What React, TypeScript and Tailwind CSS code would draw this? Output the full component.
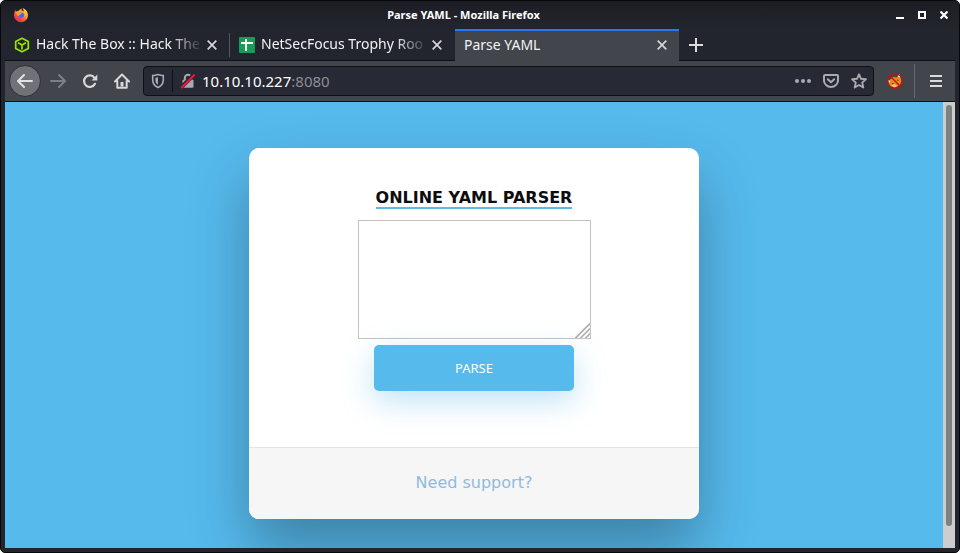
import React from "react";

type IconProps = { className?: string };

function FirefoxIcon() {
  return (
    <svg width="16" height="16" viewBox="0 0 16 16" aria-hidden="true">
      <defs>
        <linearGradient id="fx-body" x1="0.85" y1="0.05" x2="0.2" y2="0.95">
          <stop offset="0" stopColor="#ffe14a" />
          <stop offset="0.4" stopColor="#ff9a36" />
          <stop offset="0.7" stopColor="#f4503f" />
          <stop offset="1" stopColor="#e0245e" />
        </linearGradient>
      </defs>
      <path
        d="M2.6 2.8c-.1 1 .1 1.600.3 2 .9-.9 2-1.200 3-1.100C6.800 2.200 8 1.800 8.800 1.800c-.4.6-.4 1.300 0 1.900 1 .2 1.600.5 2 .9C10.700 3 10 2 9.600 1c2.600.9 5.400 3.500 5.400 7.300A7 7 0 0 1 8 15.300 7 7 0 0 1 1 8.400C1 6 1.700 4.200 2.600 2.800z"
        fill="url(#fx-body)"
      />
      <path d="M5.300 6.300c1-.9 2-.2 3.100-.6 1.400-.4 2.700.7 2.700 2.300a3 3 0 0 1-3.100 3c-1.700 0-3-1.200-3-2.800 0-.7.100-1.300.3-1.900z" fill="#3b6fe0" />
      <path d="M3 5.100c1.200-.6 2.700-.5 3.600.4.7.6 1.400.8 2.300.8-.4.900-1.200 1.200-2.200 1.400-.7.200-.8.800-.5 1.500C4.400 8.900 3.200 7.300 3 5.100z" fill="#ff9a36" />
    </svg>
  );
}

function CubeIcon() {
  return (
    <svg width="16" height="16" viewBox="0 0 16 16" fill="none" stroke="#96e600" strokeWidth="1.7" strokeLinejoin="round" aria-hidden="true">
      <path d="M8 1.200 14.300 4.500v7L8 14.800 1.700 11.500v-7z" />
      <path d="M4 5.700 8 7.900l4-2.200M8 7.900v4.700" />
    </svg>
  );
}

function SheetIcon() {
  return (
    <svg width="16" height="16" viewBox="0 0 16 16" aria-hidden="true">
      <rect width="16" height="16" rx="1" fill="#159c58" />
      <path d="M2 5h12v2H8v7H6V7H2zM6 2h2v3H6z" fill="#fff" />
    </svg>
  );
}

function CloseIcon() {
  return (
    <svg width="10" height="10" viewBox="0 0 10 10" stroke="#d6d6d8" strokeWidth="1.700" aria-hidden="true">
      <path d="M.7.700l8.600 8.600M9.300.700.7 9.300" />
    </svg>
  );
}

function BackIcon() {
  return (
    <svg width="16" height="16" viewBox="0 0 16 16" fill="none" stroke="#e2e2e4" strokeWidth="2" strokeLinecap="round" strokeLinejoin="round" aria-hidden="true">
      <path d="M15 8H1.500M7 2 1 8l6 6" />
    </svg>
  );
}

function ForwardIcon() {
  return (
    <svg width="16" height="16" viewBox="0 0 16 16" fill="none" stroke="#7d7f84" strokeWidth="2" strokeLinecap="round" strokeLinejoin="round" aria-hidden="true">
      <path d="M1 8h13.500M9 2l6 6-6 6" />
    </svg>
  );
}

function ReloadIcon() {
  return (
    <svg width="16" height="16" viewBox="0 0 16 16" fill="none" aria-hidden="true">
      <path d="M12.600 4.800A5.800 5.800 0 1 0 13 10.800" stroke="#d8d8da" strokeWidth="2.200" strokeLinecap="round" />
      <path d="M15.300 1.500v6H9.500z" fill="#d8d8da" />
    </svg>
  );
}

function HomeIcon() {
  return (
    <svg width="16" height="16" viewBox="0 0 16 16" fill="none" stroke="#d8d8da" strokeWidth="2" strokeLinecap="round" strokeLinejoin="round" aria-hidden="true">
      <path d="M1 8.500 8 1.500l7 7M3.300 8v6.700h9.400V8" />
      <path d="M8 9v4.500" strokeWidth="3" strokeLinecap="butt" />
    </svg>
  );
}

function ShieldIcon() {
  return (
    <svg width="14" height="16" viewBox="0 0 14 16" aria-hidden="true">
      <path d="M7 1.500c2 .7 3.600 1 5.300 1.100v4.200c0 3.500-2 6.300-5.300 7.700-3.300-1.400-5.300-4.200-5.300-7.700V2.600C3.400 2.500 5 2.200 7 1.500z" fill="none" stroke="#a9a9ae" strokeWidth="1.600" />
      <path d="M7 4.300c-.9.300-1.700.4-2.600.5v2.400c0 2 .9 3.500 2.600 4.600z" fill="#a9a9ae" />
    </svg>
  );
}

function InsecureIcon() {
  return (
    <svg width="16" height="16" viewBox="0 0 16 16" aria-hidden="true">
      <path d="M4.800 7V5a3.200 3.200 0 0 1 6.400 0v2" fill="none" stroke="#a9a9ae" strokeWidth="2" />
      <rect x="2.500" y="6.800" width="11" height="8" rx="1" fill="#a9a9ae" />
      <path d="M.8 14.800 14.200 1.400" stroke="#272934" strokeWidth="4" />
      <path d="M1.300 15 14.700 1.600" stroke="#ff0f45" strokeWidth="2" />
    </svg>
  );
}

function DotsIcon() {
  return (
    <svg width="16" height="16" viewBox="0 0 16 16" fill="#a9a9ae" aria-hidden="true">
      <circle cx="2" cy="8" r="2" />
      <circle cx="8" cy="8" r="2" />
      <circle cx="14" cy="8" r="2" />
    </svg>
  );
}

function PocketIcon() {
  return (
    <svg width="16" height="16" viewBox="0 0 16 16" fill="none" stroke="#a9a9ae" strokeWidth="2" strokeLinecap="round" strokeLinejoin="round" aria-hidden="true">
      <path d="M2 2h12a1 1 0 0 1 1 1v4.500a7 6.500 0 0 1-14 0V3a1 1 0 0 1 1-1z" />
      <path d="m4.800 6.300 3.200 3 3.200-3" />
    </svg>
  );
}

function StarIcon() {
  return (
    <svg width="16" height="16" viewBox="0 0 16 16" fill="none" stroke="#a9a9ae" strokeWidth="1.900" strokeLinejoin="round" aria-hidden="true">
      <path d="m8 1.300 2 4.500 4.900.5-3.700 3.300 1.100 4.900L8 12l-4.300 2.500 1.100-4.900L1.100 6.300 6 5.800z" />
    </svg>
  );
}

function FoxProxyIcon() {
  return (
    <svg width="16" height="16" viewBox="0 0 16 16" aria-hidden="true">
      <path d="M2 7.500 6 4l4 .5 2.300-3L13.500 5l1 3.500-2 4L8 14.500l-4.500-.7L1.500 10z" fill="#e88a1c" />
      <path d="M10.500 3.500 12.500 1l1 3.500zM1 7l2.500 1L2 10z" fill="#f3ece2" />
      <path d="m4 12 3-1 3 2-2.500 1.500z" fill="#f6c884" />
      <path d="m5 10.500 1.500.3M10 7l1.500.5" stroke="#5b2d08" strokeWidth="1.200" />
      <circle cx="8" cy="8" r="7.300" fill="none" stroke="#c90d0d" strokeWidth="1.200" />
      <path d="m2.800 2.800 10.400 10.400" stroke="#c90d0d" strokeWidth="1.300" />
    </svg>
  );
}

function MenuIcon() {
  return (
    <svg width="12" height="12" viewBox="0 0 12 12" fill="#dcdcde" aria-hidden="true">
      <path d="M0 0h12v2H0zM0 5h12v2H0zM0 10h12v2H0z" />
    </svg>
  );
}

function PlusIcon() {
  return (
    <svg width="14" height="14" viewBox="0 0 14 14" fill="#dcdcde" aria-hidden="true">
      <path d="M6 0h2v6h6v2H8v6H6V8H0V6h6z" />
    </svg>
  );
}

function ResizeGrip({ className }: IconProps) {
  return (
    <svg className={className} width="15" height="15" viewBox="0 0 15 15" fill="none" stroke="#b0b1b1" strokeWidth="1.700" aria-hidden="true">
      <path d="M.5 15 15 .5M5.500 15 15 5.500M10.500 15l4.500-4.500" />
    </svg>
  );
}

function TitleBar() {
  return (
    <header className="flex h-[27px] shrink-0 items-center bg-linear-to-b from-[#1c1d24] to-[#23252e] pr-[11px] pl-3">
      <FirefoxIcon />
      <h1 className="flex-1 pl-[2px] text-center text-[11px] leading-4 font-bold text-white">Parse YAML - Mozilla Firefox</h1>
      <div className="flex items-center justify-end gap-[14px]">
        <button aria-label="Minimize" className="flex h-2 w-2 items-end">
          <span className="h-[2px] w-2 bg-white" />
        </button>
        <button aria-label="Maximize" className="h-2 w-2 border-2 border-white" />
        <button aria-label="Close window">
          <svg className="block" width="8" height="8" viewBox="0 0 8 8" stroke="#fff" strokeWidth="2.200" aria-hidden="true">
            <path d="m.5.5 7 7M7.500.5l-7 7" />
          </svg>
        </button>
      </div>
    </header>
  );
}

type TabProps = { title: string; icon?: React.ReactNode; active?: boolean; divider?: boolean };

function Tab({ title, icon, active, divider }: TabProps) {
  return (
    <div
      role="tab"
      aria-selected={!!active}
      className={
        active
          ? "flex w-[224px] items-center border-t-2 border-[#2a76f5] bg-[#42454c] pr-3 pb-[2px] pl-[9px]"
          : "flex w-[225px] items-center border-b border-[#0f1014] pl-[9px]"
      }
    >
      {icon && <span className="mr-[6px] shrink-0">{icon}</span>}
      <span
        className={
          active
            ? "min-w-0 flex-1 pb-px text-sm leading-5 whitespace-nowrap"
            : "min-w-0 flex-1 mask-[linear-gradient(to_right,black_calc(100%-32px),transparent)] pb-px text-sm leading-5 whitespace-nowrap"
        }
      >
        {title}
      </span>
      <button aria-label={"Close " + title} className={active ? "shrink-0" : "mr-3 ml-1 shrink-0"}>
        <CloseIcon />
      </button>
      {!active && <span className={divider ? "h-6 w-px bg-[#54565d]" : "h-6 w-px"} />}
    </div>
  );
}

function TabStrip() {
  return (
    <div role="tablist" className="flex h-[33px] shrink-0 bg-[#23252e] pt-px text-[#f2f2f3]">
      <Tab title="Hack The Box :: Hack The" icon={<CubeIcon />} divider />
      <Tab title="NetSecFocus Trophy Roo" icon={<SheetIcon />} />
      <Tab title="Parse YAML" active />
      <div className="flex flex-1 items-center border-b border-[#0f1014] pl-[10px]">
        <button aria-label="Open a new tab">
          <PlusIcon />
        </button>
      </div>
    </div>
  );
}

function Toolbar() {
  return (
    <nav className="flex h-[41px] shrink-0 items-center border-b border-[#0f1014] bg-[#42454c] px-1">
      <button aria-label="Back" className="mr-px flex h-8 w-8 items-center justify-center rounded-full border border-[#2c2e35] bg-[#717278]">
        <BackIcon />
      </button>
      <button aria-label="Forward" className="flex h-8 w-8 items-center justify-center">
        <ForwardIcon />
      </button>
      <button aria-label="Reload" className="flex h-8 w-8 items-center justify-center">
        <ReloadIcon />
      </button>
      <button aria-label="Home" className="flex h-8 w-8 items-center justify-center">
        <HomeIcon />
      </button>
      <div className="ml-[5px] flex h-[30px] flex-1 items-center rounded border border-[#0f1014] bg-[#272934] pr-[6px] pl-[7px] text-[15px] leading-5">
        <button aria-label="Tracking protection">
          <ShieldIcon />
        </button>
        <span className="mx-[7px] h-[22px] w-px bg-[#0f1014]" />
        <button aria-label="Connection is not secure">
          <InsecureIcon />
        </button>
        <span className="ml-[6px] flex-1 text-white">
          10.10.10.227<span className="text-[#8d8e94]">:8080</span>
        </span>
        <div className="flex gap-3">
          <button aria-label="Page actions">
            <DotsIcon />
          </button>
          <button aria-label="Save to Pocket">
            <PocketIcon />
          </button>
          <button aria-label="Bookmark this page">
            <StarIcon />
          </button>
        </div>
      </div>
      <button aria-label="FoxyProxy" className="ml-[13px]">
        <FoxProxyIcon />
      </button>
      <span className="ml-[11px] h-[34px] w-px bg-[#65676d]" />
      <button aria-label="Open menu" className="mr-[9px] ml-[15px]">
        <MenuIcon />
      </button>
    </nav>
  );
}

function ParserCard() {
  return (
    <section className="w-full max-w-[450px] overflow-hidden rounded-[10px] bg-white text-center font-['DejaVu_Sans',sans-serif] shadow-[0_30px_60px_0_rgba(0,0,0,0.3)]">
      <form className="flex flex-col items-center pt-10 pb-14" onSubmit={(e) => e.preventDefault()}>
        <label htmlFor="yaml" className="border-b-2 border-[#5fbae9] text-base leading-[19px] font-bold text-[#0d0d0d] uppercase">
          Online YAML Parser
        </label>
        <div className="relative mt-[11px] h-[119px] w-[233px]">
          <textarea id="yaml" className="block h-full w-full resize-none border border-[#c8c2bd] bg-white p-1 text-sm outline-none" />
          <ResizeGrip className="absolute right-px bottom-px" />
        </div>
        <button
          type="submit"
          className="relative mt-[6px] h-[46px] w-[200px] rounded-[5px] bg-[#56baed] font-['Noto_Sans',sans-serif] text-[13px] leading-4 text-white uppercase shadow-[0_10px_30px_0_rgba(95,186,233,0.4)]"
        >
          Parse
        </button>
      </form>
      <div className="border-t border-[#dce8f1] bg-[#f6f6f6] pt-6 pb-[26px]">
        <a href="#support" className="block text-base leading-[21px] text-[#92badd]">
          Need support?
        </a>
      </div>
    </section>
  );
}

export default function App() {
  return (
    <div className="h-screen bg-white">
      <div className="flex h-full flex-col overflow-hidden rounded-[5px] border border-[#08080b] bg-[#23252e] font-['Noto_Sans',sans-serif]">
        <TitleBar />
        <div className="mx-1 mb-1 flex min-h-0 flex-1 flex-col">
          <TabStrip />
          <Toolbar />
          <div className="flex min-h-0 flex-1">
            <main className="flex flex-1 items-start justify-center overflow-hidden bg-[#56baed] pt-[46px]">
              <ParserCard />
            </main>
            <div className="w-3 bg-[#cdcdcd] px-[3px] pt-[3px]">
              <div className="h-[95%] rounded-full bg-[#7d8180]" />
            </div>
          </div>
        </div>
      </div>
    </div>
  );
}
